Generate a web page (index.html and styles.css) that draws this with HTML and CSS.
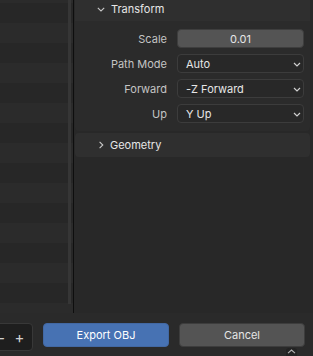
FILE: index.html
```html
<!DOCTYPE html>
<html lang="en">

<head>
    <meta charset="UTF-8">
    <meta name="viewport" content="width=device-width, initial-scale=1.0">
    <title>Export OBJ</title>
    <link rel="stylesheet" href="styles.css">
</head>

<body>
    <div class="window">
        <div class="main">
            <div class="files">
                <div class="row"></div>
                <div class="row"></div>
                <div class="row"></div>
                <div class="row"></div>
                <div class="row"></div>
                <div class="row"></div>
                <div class="row"></div>
                <div class="row"></div>
                <div class="row"></div>
                <div class="row"></div>
                <div class="row"></div>
                <div class="row"></div>
                <div class="row"></div>
                <div class="row"></div>
                <div class="row"></div>
                <div class="row"></div>
                <div class="row"></div>
                <div class="scrollbar"></div>
            </div>
            <div class="divider"></div>
            <div class="sidebar">
                <section class="panel">
                    <div class="panel-header top">
                        <svg class="arrow" width="8" height="5" viewBox="0 0 8 5"><path d="M0.8 0.8 L4 4 L7.2 0.8" /></svg>
                        <span>Transform</span>
                    </div>
                    <div class="panel-body">
                        <span class="label">Scale</span>
                        <div class="num-field">0.01</div>

                        <span class="label">Path Mode</span>
                        <div class="select">Auto
                            <svg class="caret" width="8" height="5" viewBox="0 0 8 5"><path d="M1 1 L4 4 L7 1" /></svg>
                        </div>

                        <span class="label">Forward</span>
                        <div class="select">-Z Forward
                            <svg class="caret" width="8" height="5" viewBox="0 0 8 5"><path d="M1 1 L4 4 L7 1" /></svg>
                        </div>

                        <span class="label">Up</span>
                        <div class="select">Y Up
                            <svg class="caret" width="8" height="5" viewBox="0 0 8 5"><path d="M1 1 L4 4 L7 1" /></svg>
                        </div>
                    </div>
                </section>
                <section class="panel closed">
                    <div class="panel-header">
                        <svg class="arrow" width="8" height="8" viewBox="0 0 8 8"><path d="M2.6 0.8 L5.8 4 L2.6 7.2" /></svg>
                        <span>Geometry</span>
                    </div>
                </section>
            </div>
        </div>
        <div class="footer">
            <div class="zoom-ctrl"><span>−</span><span>+</span></div>
            <button class="btn primary">Export OBJ</button>
            <button class="btn">Cancel</button>
            <div class="corner-tab">
                <svg width="9" height="5" viewBox="0 0 9 5"><path d="M1 4.2 L4.5 1 L8 4.2" /></svg>
            </div>
        </div>
    </div>
</body>

</html>
```

FILE: styles.css
```css
body {
    margin: 0;
    background: #282828;
    font-family: Inter, "Noto Sans", sans-serif;
    font-size: 11px;
    color: #e6e6e6;
}

.window {
    width: 313px;
    height: 356px;
    overflow: hidden;
    display: flex;
    flex-direction: column;
    position: relative;
}

.main {
    height: 313px;
    display: flex;
}

.files {
    position: relative;
    width: 73px;
    overflow: hidden;
}

.row {
    height: 20px;
    background: #2b2b2b;
}

.row:first-child {
    margin-top: -17px;
}

.row:nth-child(even) {
    background: #272727;
}

.scrollbar {
    position: absolute;
    top: 0;
    left: 68px;
    width: 3px;
    height: 304px;
    background: #363636;
}

.divider {
    width: 1px;
    background: #0e0e0e;
}

.sidebar {
    flex: 1;
    background: #282828;
    padding: 0 3px 0 1px;
}

.panel {
    border-radius: 0 0 4px 4px;
    margin-bottom: 2px;
}

.panel-header {
    height: 24px;
    display: flex;
    align-items: center;
    padding-left: 22px;
    background: #2f2f2f;
    color: #e6e6e6;
    border-radius: 4px;
}

.panel-header.top {
    height: 18px;
    padding-bottom: 3px;
    border-radius: 0;
}

.panel-header.top span {
    margin-left: 6px;
}

.closed .panel-header span {
    margin-left: 5px;
}

.arrow {
    fill: none;
    stroke: #c8c8c8;
    stroke-width: 1.1;
}

.panel-body {
    display: grid;
    grid-template-columns: 92px 127px;
    column-gap: 10px;
    row-gap: 6px;
    align-items: center;
    padding: 8px 6px 8px 0;
    background: #2b2b2b;
    border-radius: 0 0 4px 4px;
}

.label {
    text-align: right;
    color: #c4c4c4;
}

.num-field,
.select {
    box-sizing: border-box;
    height: 19px;
    border-radius: 4px;
    display: flex;
    align-items: center;
}

.num-field {
    justify-content: center;
    background: #545454;
    border: 1px solid #3e3e3e;
    color: #e6e6e6;
}

.select {
    position: relative;
    padding-left: 8px;
    background: #282828;
    border: 1px solid #3c3c3c;
    color: #e6e6e6;
}

.caret {
    position: absolute;
    right: 2px;
    top: 7px;
    fill: none;
    stroke: #cfcfcf;
    stroke-width: 1.2;
}

.footer {
    flex: 1;
    display: flex;
    align-items: flex-start;
    gap: 10px;
    padding-top: 10px;
    background: #2a2a2a;
}

.zoom-ctrl {
    box-sizing: border-box;
    margin-left: -10px;
    width: 43px;
    height: 28px;
    padding-right: 3px;
    display: flex;
    align-items: center;
    background: #1e1e1e;
    border: 1px solid #383838;
    border-radius: 4px;
    color: #d0d0d0;
    font-size: 15px;
}

.zoom-ctrl span {
    width: 20px;
    text-align: center;
}

.btn {
    box-sizing: border-box;
    width: 126px;
    height: 24px;
    border-radius: 4px;
    border: 1px solid #3d3d3d;
    background: #545454;
    color: #e6e6e6;
    font-family: Inter, "Noto Sans", sans-serif;
    font-size: 11px;
    padding: 0;
}

.btn.primary {
    background: #4772b3;
    border-color: #4268a3;
    color: #ffffff;
}

.corner-tab {
    position: absolute;
    right: 16px;
    bottom: 0;
    width: 11px;
    height: 7px;
    background: #232323;
    border-radius: 3px 3px 0 0;
    display: flex;
    justify-content: center;
    align-items: flex-start;
    padding-top: 1px;
}

.corner-tab svg {
    fill: none;
    stroke: #b4b4b4;
    stroke-width: 1.1;
}
```
